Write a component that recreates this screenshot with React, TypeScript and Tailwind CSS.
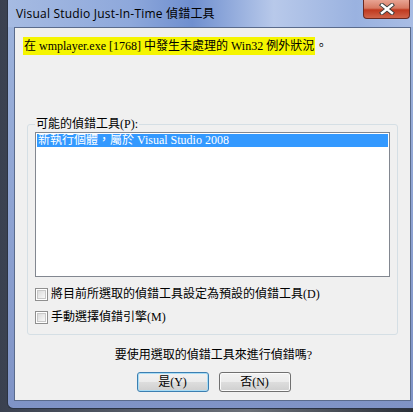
import React from "react";

const cjk = { fontFamily: '"Liberation Serif", "Noto Sans CJK TC", serif' };

function Checkbox({ label }: { label: string }) {
  return (
    <div className="flex items-center h-[14px]">
      <div className="w-[13px] h-[13px] border border-[#8f8f8f] bg-white p-[1px] shrink-0">
        <div className="w-full h-full bg-gradient-to-br from-[#dcdcdc] to-[#f8f8f8] border border-[#c8c8c8]" />
      </div>
      <span className="ml-[3px] text-[12px] leading-[14px] text-black whitespace-nowrap" style={cjk}>
        {label}
      </span>
    </div>
  );
}

function Button({ label, focused }: { label: string; focused?: boolean }) {
  return (
    <div
      className={
        "w-[72px] h-[20px] rounded-[3px] border flex items-center justify-center " +
        (focused ? "border-[#3c7fb1] shadow-[inset_0_0_0_1px_#a8dcf5]" : "border-[#707070] shadow-[inset_0_0_0_1px_#fbfbfb]")
      }
      style={{
        background: "linear-gradient(#f2f2f2 0%, #ebebeb 50%, #dddddd 51%, #cfcfcf 100%)",
      }}
    >
      <span className="text-[12px] leading-[14px] text-black" style={cjk}>
        {label}
      </span>
    </div>
  );
}

export default function App() {
  return (
    <div
      className="w-[413px] h-[412px] overflow-hidden relative"
      style={{ background: "linear-gradient(90deg,#3a4150 0%,#6b7079 60%,#2a2f38 100%)" }}
    >
      <div className="absolute left-[7px] top-0 w-[410px] h-[409px] rounded-bl-[6px] border-l border-b border-[#2b3342] bg-gradient-to-b from-[#9fb5dd] via-[#8fa4d3] to-[#7f93c6] flex flex-col">
        {/* title bar */}
        <div
          className="h-[27px] shrink-0 flex items-start relative"
          style={{
            background:
              "linear-gradient(90deg,#a6bbe2 0%,#8ea8db 30%,#6f8fcf 45%,#b8c9ea 65%,#9ab2e0 85%,#a9bde4 100%)",
          }}
        >
          <span
            className="ml-[8px] mt-[6px] text-[12px] leading-[15px] text-black whitespace-nowrap tracking-[0.2px]"
            style={{ fontFamily: '"Open Sans", "Noto Sans CJK TC", sans-serif' }}
          >
            Visual Studio Just-In-Time 偵錯工具
          </span>
          <div
            className="absolute left-[355px] top-0 w-[47px] h-[19px] rounded-b-[4px] border border-t-0 border-[#6b2a22] flex items-center justify-center"
            style={{ background: "linear-gradient(#e8a493 0%,#d77a63 45%,#c0391f 55%,#d0644a 100%)" }}
          >
            <svg width="16" height="12" viewBox="0 0 16 12">
              <path d="M3 2 L13 10 M13 2 L3 10" stroke="#3b3b3b" strokeWidth="4.2" strokeLinecap="square" />
              <path d="M3 2 L13 10 M13 2 L3 10" stroke="#ffffff" strokeWidth="2.4" strokeLinecap="square" />
            </svg>
          </div>
        </div>
        {/* client */}
        <div className="mx-[6px] h-[374px] border border-[#5a6b8c] bg-[#f0f0f0] flex flex-col">
          <div className="pl-[8px] pt-[9px] h-[96px] shrink-0">
            <div className="flex items-center h-[18px]">
              <span
                className="bg-[#f5f500] px-[1px] h-[18px] leading-[18px] text-[12px] text-black whitespace-nowrap"
                style={cjk}
              >
                在 wmplayer.exe [1768] 中發生未處理的 Win32 例外狀況
              </span>
              <span className="text-[12px] leading-[18px] text-black" style={cjk}>
                。
              </span>
            </div>
          </div>
          {/* group box */}
          <div className="mx-[12px] h-[211px] shrink-0 border border-[#d5dfe5] rounded-[3px] relative px-[7px] pt-[7px] flex flex-col">
            <span
              className="absolute left-[7px] top-[-8px] bg-[#f0f0f0] px-[1px] text-[12px] leading-[14px] text-black whitespace-nowrap"
              style={cjk}
            >
              可能的偵錯工具(P):
            </span>
            <div className="h-[145px] border border-[#828790] bg-white p-[1px]">
              <div className="h-[13px] bg-[#3399ff] flex items-center pl-[1px]">
                <span className="text-[12px] leading-[13px] text-white whitespace-nowrap" style={cjk}>
                  新執行個體，屬於 Visual Studio 2008
                </span>
              </div>
            </div>
            <div className="mt-[10px] flex flex-col gap-[9px]">
              <Checkbox label="將目前所選取的偵錯工具設定為預設的偵錯工具(D)" />
              <Checkbox label="手動選擇偵錯引擎(M)" />
            </div>
          </div>
          <div className="mt-[13px] flex justify-center pl-[2px]">
            <span className="text-[12px] leading-[14px] text-black whitespace-nowrap" style={cjk}>
              要使用選取的偵錯工具來進行偵錯嗎?
            </span>
          </div>
          <div className="mt-[10px] flex justify-center gap-[10px] pl-[2px]">
            <Button label="是(Y)" focused />
            <Button label="否(N)" />
          </div>
        </div>
      </div>
    </div>
  );
}
